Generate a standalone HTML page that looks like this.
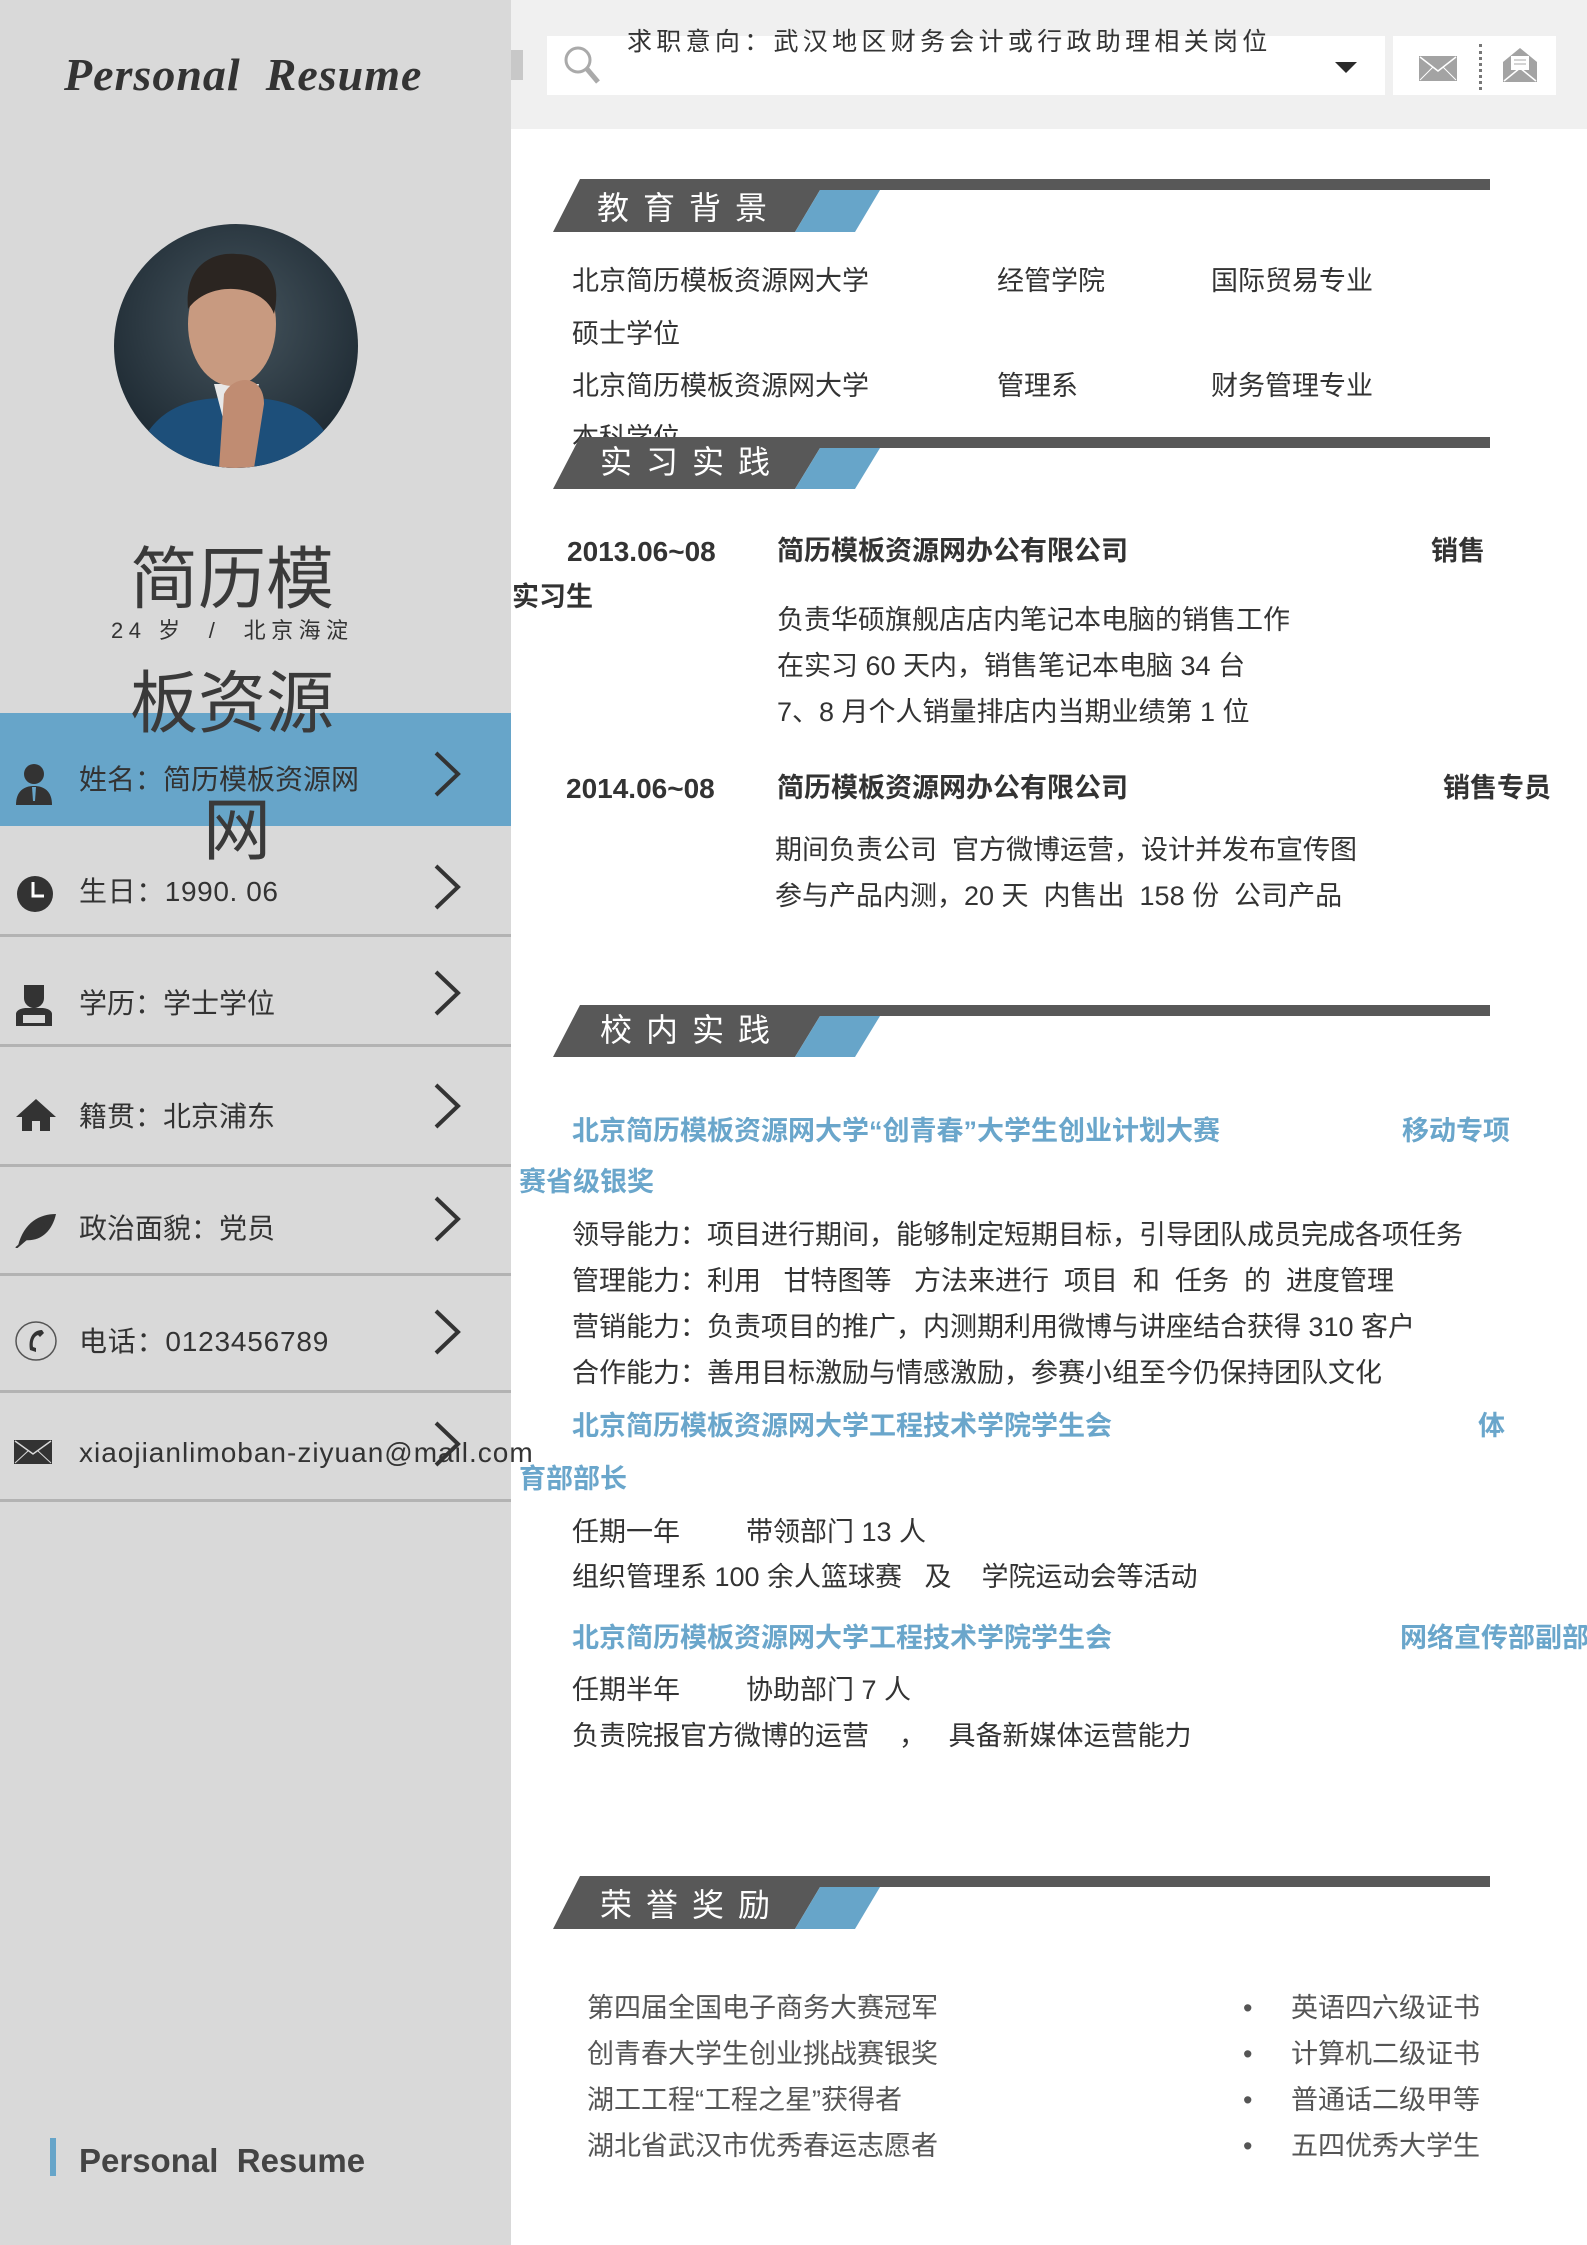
<!DOCTYPE html>
<html><head><meta charset="utf-8">
<style>
*{margin:0;padding:0;box-sizing:border-box}
body{width:1587px;height:2245px;position:relative;background:#fff;font-family:"Liberation Sans","Noto Sans CJK SC",sans-serif;color:#333;overflow:hidden}
.a{position:absolute;white-space:nowrap;line-height:1}
.t{font-size:27px;color:#333}
.b{font-weight:bold}
.blue{color:#6aa6cb;font-weight:bold;font-size:27px}
.side{position:absolute;left:0;top:0;width:511px;height:2245px;background:#d9d9d9}
.sep{position:absolute;left:0;width:511px;height:3px;background:#b3b3b3}
.row{position:absolute;left:79px;font-size:28px;color:#333;line-height:1}
.chev{position:absolute;left:432px}
.ic{position:absolute;left:14px}
</style></head><body>
<div class="side"></div>
<!-- top bar -->
<div class="a" style="left:511px;top:0;width:1076px;height:129px;background:#f0f0f0"></div>
<div class="a" style="left:511px;top:50px;width:12px;height:30px;background:#c8c8c8"></div>
<div class="a" style="left:547px;top:36px;width:838px;height:59px;background:#fff"></div>
<div class="a" style="left:1393px;top:36px;width:163px;height:59px;background:#fff"></div>
<svg class="a" style="left:562px;top:44px" width="44" height="42"><circle cx="16" cy="16" r="12" fill="none" stroke="#aaa" stroke-width="3"/><line x1="25" y1="25" x2="36" y2="38" stroke="#aaa" stroke-width="5"/></svg>
<div class="a" style="left:627px;top:30px;font-size:25px;letter-spacing:4.3px;color:#333">求职意向：武汉地区财务会计或行政助理相关岗位</div>
<svg class="a" style="left:1335px;top:62px" width="22" height="12"><polygon points="0,0 22,0 11,11" fill="#2a2a2a"/></svg>
<svg class="a" style="left:1419px;top:56px" width="38" height="26"><rect width="38" height="25" fill="#a3a3a3"/><polyline points="1,1 19,15 37,1" fill="none" stroke="#fff" stroke-width="1.5"/><line x1="1" y1="24" x2="14" y2="11" stroke="#fff"/><line x1="37" y1="24" x2="24" y2="11" stroke="#fff"/></svg>
<div class="a" style="left:1479px;top:44px;height:46px;border-left:3px dotted #777"></div>
<svg class="a" style="left:1503px;top:48px" width="34" height="36"><path d="M0,14 L17,0 L34,14 L34,34 L0,34 Z" fill="#a3a3a3"/><rect x="8" y="8" width="18" height="14" fill="#fff"/><line x1="11" y1="12" x2="23" y2="12" stroke="#aaa"/><line x1="11" y1="16" x2="23" y2="16" stroke="#aaa"/><polyline points="1,33 17,20 33,33" fill="none" stroke="#fff" stroke-width="1.5"/></svg>

<!-- sidebar -->
<div class="a" style="left:64px;top:52px;font-family:'Liberation Serif',serif;font-style:italic;font-weight:bold;font-size:46px;color:#333;letter-spacing:1px">Personal&nbsp; Resume</div>
<svg class="a" style="left:114px;top:224px" width="244" height="244">
<defs><clipPath id="c"><circle cx="122" cy="122" r="122"/></clipPath>
<radialGradient id="g" cx="50%" cy="40%" r="60%"><stop offset="0" stop-color="#46555e"/><stop offset="1" stop-color="#1e2a33"/></radialGradient></defs>
<g clip-path="url(#c)"><rect width="244" height="244" fill="url(#g)"/>
<path d="M20,244 C30,190 70,170 122,175 C175,170 215,190 225,244 Z" fill="#1d4f7a"/>
<path d="M100,160 L122,244 L145,160 Z" fill="#e8e8e8"/>
<ellipse cx="118" cy="100" rx="44" ry="62" fill="#c89a80"/>
<path d="M74,85 C70,40 100,28 122,30 C155,30 168,55 160,90 C150,60 95,55 74,85 Z" fill="#2b2521"/>
<path d="M110,170 C120,150 150,150 150,180 L140,244 L105,244 Z" fill="#c08c72"/>
</g></svg>
<div class="a" style="left:0;top:713px;width:511px;height:113px;background:#67a5c9"></div>
<div class="a" style="left:130px;top:546px;font-size:68px;color:#3a3a3a">简历模</div>
<div class="a" style="left:111px;top:620px;font-size:22px;letter-spacing:5.5px;color:#333">24 岁 &nbsp;/ &nbsp;北京海淀</div>
<div class="a" style="left:130px;top:670px;font-size:68px;color:#3a3a3a">板资源</div>
<div class="a" style="left:203px;top:797px;font-size:68px;color:#3a3a3a">网</div>

<div class="sep" style="top:934px"></div>
<div class="sep" style="top:1044px"></div>
<div class="sep" style="top:1164px"></div>
<div class="sep" style="top:1273px"></div>
<div class="sep" style="top:1390px"></div>
<div class="sep" style="top:1499px"></div>

<!-- icons -->
<svg class="ic" style="top:763px" width="40" height="44"><circle cx="20" cy="11" r="10" fill="#333"/><path d="M2,42 C2,28 10,23 20,23 C30,23 38,28 38,42 Z" fill="#333"/><path d="M18,24 L22,24 L21,38 L19,38 Z" fill="#67a5c9"/></svg>
<svg class="ic" style="top:873px" width="42" height="42"><circle cx="21" cy="21" r="18" fill="#333"/><polyline points="19,9 19,23 30,23" fill="none" stroke="#fff" stroke-width="3"/></svg>
<svg class="ic" style="top:982px" width="40" height="46"><path d="M10,3 L30,3 L30,16 C30,22 25,26 20,26 C15,26 10,22 10,16 Z" fill="#333"/><path d="M2,44 L2,32 C2,28 8,26 12,26 L28,26 C32,26 38,28 38,32 L38,44 Z" fill="#333"/><rect x="9" y="33" width="22" height="8" fill="#d9d9d9"/></svg>
<svg class="ic" style="top:1097px" width="44" height="36"><polygon points="22,2 42,20 36,20 36,34 26,34 26,24 18,24 18,34 8,34 8,20 2,20" fill="#333"/></svg>
<svg class="ic" style="top:1208px" width="44" height="40"><path d="M4,38 C10,14 26,6 42,6 C38,24 26,34 10,32 Z" fill="#333"/><line x1="2" y1="40" x2="30" y2="16" stroke="#333" stroke-width="2"/></svg>
<svg class="ic" style="top:1320px" width="44" height="42"><ellipse cx="22" cy="21" rx="20" ry="19" fill="none" stroke="#555" stroke-width="1.5"/><path d="M28,10 C18,10 14,20 16,30 L22,32 L22,28 L19,27 C18,22 20,16 24,15 L26,17 L30,13 Z" fill="#333"/></svg>
<svg class="ic" style="top:1440px" width="40" height="26"><rect width="38" height="24" fill="#333"/><polyline points="1,1 19,14 37,1" fill="none" stroke="#d9d9d9" stroke-width="1.5"/><line x1="1" y1="23" x2="14" y2="11" stroke="#d9d9d9"/><line x1="37" y1="23" x2="24" y2="11" stroke="#d9d9d9"/></svg>

<div class="row" style="top:766px">姓名：简历模板资源网</div>
<div class="row" style="top:878px;letter-spacing:0.6px">生日：1990. 06</div>
<div class="row" style="top:990px">学历：学士学位</div>
<div class="row" style="top:1103px">籍贯：北京浦东</div>
<div class="row" style="top:1215px">政治面貌：党员</div>
<div class="row" style="top:1328px;letter-spacing:0.8px">电话：0123456789</div>
<div class="row" style="top:1439px;letter-spacing:1px">xiaojianlimoban-ziyuan@mail.com</div>

<svg class="chev" style="top:751px" width="30" height="46"><polyline points="4,2 26,23 4,44" fill="none" stroke="#333" stroke-width="4"/></svg>
<svg class="chev" style="top:864px" width="30" height="46"><polyline points="4,2 26,23 4,44" fill="none" stroke="#333" stroke-width="4"/></svg>
<svg class="chev" style="top:970px" width="30" height="46"><polyline points="4,2 26,23 4,44" fill="none" stroke="#333" stroke-width="4"/></svg>
<svg class="chev" style="top:1083px" width="30" height="46"><polyline points="4,2 26,23 4,44" fill="none" stroke="#333" stroke-width="4"/></svg>
<svg class="chev" style="top:1196px" width="30" height="46"><polyline points="4,2 26,23 4,44" fill="none" stroke="#333" stroke-width="4"/></svg>
<svg class="chev" style="top:1309px" width="30" height="46"><polyline points="4,2 26,23 4,44" fill="none" stroke="#333" stroke-width="4"/></svg>
<svg class="chev" style="top:1421px" width="30" height="46"><polyline points="4,2 26,23 4,44" fill="none" stroke="#333" stroke-width="4"/></svg>

<div class="a" style="left:50px;top:2138px;width:6px;height:38px;background:#67a5c9"></div>
<div class="a b" style="left:79px;top:2144px;font-size:33px;color:#444">Personal&nbsp; Resume</div>

<!-- section headers -->
<svg class="a" style="left:0;top:0" width="1587" height="2245">
<g fill="#585858">
<polygon points="580,179 1490,179 1490,190 820,190 795,232 553,232"/>
<polygon points="580,1005 1490,1005 1490,1016 820,1016 795,1057 553,1057"/>
<polygon points="580,1876 1490,1876 1490,1887 820,1887 795,1929 553,1929"/>
</g>
<g fill="#67a5c9">
<polygon points="820,190 880,190 855,232 795,232"/>
<polygon points="820,1016 880,1016 855,1057 795,1057"/>
<polygon points="820,1887 880,1887 855,1929 795,1929"/>
</g></svg>
<div class="a" style="left:597px;top:192px;font-size:32px;color:#fff;letter-spacing:14px">教育背景</div>
<div class="a" style="left:600px;top:1014px;font-size:32px;color:#fff;letter-spacing:14px">校内实践</div>
<div class="a" style="left:600px;top:1889px;font-size:32px;color:#fff;letter-spacing:14px">荣誉奖励</div>

<!-- edu -->
<div class="a t" style="left:572px;top:268px">北京简历模板资源网大学</div>
<div class="a t" style="left:997px;top:268px">经管学院</div>
<div class="a t" style="left:1211px;top:268px">国际贸易专业</div>
<div class="a t" style="left:572px;top:321px">硕士学位</div>
<div class="a t" style="left:572px;top:373px">北京简历模板资源网大学</div>
<div class="a t" style="left:997px;top:373px">管理系</div>
<div class="a t" style="left:1211px;top:373px">财务管理专业</div>
<div class="a t" style="left:572px;top:425px">本科学位</div>
<svg class="a" style="left:0;top:0" width="1587" height="500"><polygon points="580,437 1490,437 1490,448 820,448 795,489 553,489" fill="#585858"/><polygon points="820,448 880,448 855,489 795,489" fill="#67a5c9"/></svg>
<div class="a" style="left:600px;top:446px;font-size:32px;color:#fff;letter-spacing:14px">实习实践</div>

<!-- intern -->
<div class="a t b" style="left:567px;top:538px;font-size:28px">2013.06~08</div>
<div class="a t b" style="left:777px;top:538px">简历模板资源网办公有限公司</div>
<div class="a t b" style="left:1431px;top:538px">销售</div>
<div class="a t b" style="left:512px;top:584px">实习生</div>
<div class="a t" style="left:777px;top:607px">负责华硕旗舰店店内笔记本电脑的销售工作</div>
<div class="a t" style="left:777px;top:653px">在实习 60 天内，销售笔记本电脑 34 台</div>
<div class="a t" style="left:777px;top:699px">7、8 月个人销量排店内当期业绩第 1 位</div>
<div class="a t b" style="left:566px;top:775px;font-size:28px">2014.06~08</div>
<div class="a t b" style="left:777px;top:775px">简历模板资源网办公有限公司</div>
<div class="a t b" style="left:1443px;top:775px">销售专员</div>
<div class="a t" style="left:775px;top:837px">期间负责公司&nbsp; 官方微博运营，设计并发布宣传图</div>
<div class="a t" style="left:775px;top:883px">参与产品内测，20 天&nbsp; 内售出&nbsp; 158 份&nbsp; 公司产品</div>

<!-- campus -->
<div class="a blue" style="left:572px;top:1118px">北京简历模板资源网大学“创青春”大学生创业计划大赛</div>
<div class="a blue" style="left:1402px;top:1118px">移动专项</div>
<div class="a blue" style="left:519px;top:1169px">赛省级银奖</div>
<div class="a t" style="left:572px;top:1222px">领导能力：项目进行期间，能够制定短期目标，引导团队成员完成各项任务</div>
<div class="a t" style="left:572px;top:1268px">管理能力：利用&nbsp;&nbsp; 甘特图等&nbsp;&nbsp; 方法来进行&nbsp; 项目&nbsp; 和&nbsp; 任务&nbsp; 的&nbsp; 进度管理</div>
<div class="a t" style="left:572px;top:1314px">营销能力：负责项目的推广，内测期利用微博与讲座结合获得 310 客户</div>
<div class="a t" style="left:572px;top:1360px">合作能力：善用目标激励与情感激励，参赛小组至今仍保持团队文化</div>
<div class="a blue" style="left:572px;top:1413px">北京简历模板资源网大学工程技术学院学生会</div>
<div class="a blue" style="left:1478px;top:1413px">体</div>
<div class="a blue" style="left:519px;top:1466px">育部部长</div>
<div class="a t" style="left:572px;top:1519px">任期一年</div>
<div class="a t" style="left:746px;top:1519px">带领部门 13 人</div>
<div class="a t" style="left:572px;top:1564px">组织管理系 100 余人篮球赛&nbsp;&nbsp; 及&nbsp;&nbsp;&nbsp; 学院运动会等活动</div>
<div class="a blue" style="left:572px;top:1625px">北京简历模板资源网大学工程技术学院学生会</div>
<div class="a blue" style="left:1400px;top:1625px">网络宣传部副部</div>
<div class="a t" style="left:572px;top:1677px">任期半年</div>
<div class="a t" style="left:746px;top:1677px">协助部门 7 人</div>
<div class="a t" style="left:572px;top:1723px">负责院报官方微博的运营&nbsp;&nbsp;&nbsp; ，&nbsp;&nbsp; 具备新媒体运营能力</div>

<!-- awards -->
<div class="a t" style="left:587px;top:1995px;color:#555">第四届全国电子商务大赛冠军</div>
<div class="a t" style="left:587px;top:2041px;color:#555">创青春大学生创业挑战赛银奖</div>
<div class="a t" style="left:587px;top:2087px;color:#555">湖工工程“工程之星”获得者</div>
<div class="a t" style="left:587px;top:2133px;color:#555">湖北省武汉市优秀春运志愿者</div>
<div class="a t" style="left:1243px;top:1995px;color:#555">•</div>
<div class="a t" style="left:1243px;top:2041px;color:#555">•</div>
<div class="a t" style="left:1243px;top:2087px;color:#555">•</div>
<div class="a t" style="left:1243px;top:2133px;color:#555">•</div>
<div class="a t" style="left:1291px;top:1995px;color:#555">英语四六级证书</div>
<div class="a t" style="left:1291px;top:2041px;color:#555">计算机二级证书</div>
<div class="a t" style="left:1291px;top:2087px;color:#555">普通话二级甲等</div>
<div class="a t" style="left:1291px;top:2133px;color:#555">五四优秀大学生</div>
</body></html>
